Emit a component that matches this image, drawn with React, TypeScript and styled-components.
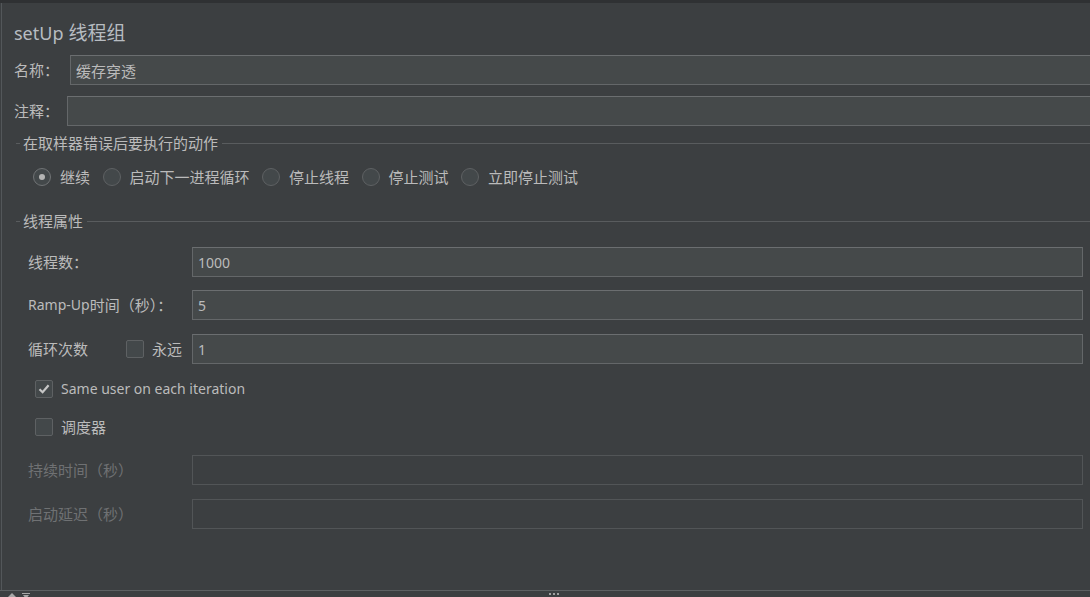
import React, { FC } from "react";
import styled, { createGlobalStyle } from "styled-components";

const GlobalStyle = createGlobalStyle`
  html, body {
    margin: 0;
    padding: 0;
    background: #3c3f41;
  }
  body {
    font-family: "Noto Sans CJK SC", "Noto Sans", sans-serif;
    font-size: 15px;
    color: #bbbbbb;
  }
`;

const StyledFrame = styled.div`
  width: 1090px;
  height: 597px;
  display: flex;
  flex-direction: column;
  overflow: hidden;
  background: #3c3f41;
`;

const StyledTopStrip = styled.div`
  height: 3px;
  background: #2f3133;
  flex-shrink: 0;
`;

const StyledPanel = styled.div`
  flex: 1;
  margin-left: 1px;
  border-left: 1px solid #53575a;
  padding: 17px 0 0 12px;
  display: flex;
  flex-direction: column;
  overflow: hidden;
`;

const StyledTitle = styled.h1`
  margin: 0 0 11px;
  height: 24px;
  display: flex;
  align-items: baseline;
  gap: 5px;
  font-size: 19px;
  font-weight: 400;
  line-height: 24px;
  color: #b7bcc1;
`;

const StyledLatin = styled.span<{ $size?: number }>`
  font-family: "Noto Sans", "Noto Sans CJK SC", sans-serif;
  font-size: ${({ $size }) => $size ?? 14}px;
`;

const StyledFieldRow = styled.div<{ $labelWidth: number; $gap?: number }>`
  display: flex;
  align-items: center;
  margin-bottom: ${({ $gap }) => $gap ?? 11}px;

  & > label {
    width: ${({ $labelWidth }) => $labelWidth}px;
  }
`;

const StyledLabel = styled.label<{ $disabled?: boolean }>`
  flex-shrink: 0;
  display: flex;
  align-items: center;
  line-height: 20px;
  color: ${({ $disabled }) => ($disabled ? "#6f7173" : "#bbbbbb")};
  white-space: nowrap;
`;

const StyledInput = styled.input<{ $bleed?: boolean; $latin?: boolean }>`
  flex: 1;
  min-width: 0;
  height: 30px;
  box-sizing: border-box;
  margin: 0 ${({ $bleed }) => ($bleed ? "-6px" : "7px")} 0 0;
  padding: 0 5px;
  border: 1px solid #646769;
  border-top-color: #6b6e70;
  background: #45494a;
  color: #bbbbbb;
  font-family: ${({ $latin }) =>
    $latin ? '"Noto Sans", "Noto Sans CJK SC", sans-serif' : "inherit"};
  font-size: ${({ $latin }) => ($latin ? 14 : 15)}px;
  outline: none;

  &:disabled {
    background: #3c3f41;
    border-color: #525557;
  }
`;

const StyledGroup = styled.section`
  margin-left: 2px;
`;

const StyledGroupHeader = styled.div`
  display: flex;
  align-items: center;
  gap: 3px;
  height: 20px;
  line-height: 20px;
`;

const StyledGroupLine = styled.span<{ $grow?: boolean }>`
  height: 1px;
  background: #595c5e;
  ${({ $grow }) => ($grow ? "flex: 1; margin-left: 1px;" : "width: 4px;")}
`;

const StyledRadioRow = styled.div`
  display: flex;
  align-items: center;
  padding-left: 17px;
  margin: 14px 0 24px;
  height: 20px;
`;

const StyledRadioItem = styled.label`
  display: flex;
  align-items: center;
  gap: 9px;
  margin-right: 12.5px;
  line-height: 20px;
`;

const StyledRadioCircle = styled.span<{ $checked?: boolean }>`
  width: 18px;
  height: 18px;
  box-sizing: border-box;
  border-radius: 50%;
  border: 1px solid ${({ $checked }) => ($checked ? "#707375" : "#5e6163")};
  background: #43484a;
  display: flex;
  align-items: center;
  justify-content: center;

  &::after {
    content: "";
    width: 6px;
    height: 6px;
    border-radius: 50%;
    background: #b4b4b4;
    display: ${({ $checked }) => ($checked ? "block" : "none")};
  }
`;

const StyledThreadBody = styled.div`
  padding: 16px 0 0 12px;
`;

const StyledCheckRow = styled.label<{ $top: number }>`
  display: flex;
  align-items: center;
  gap: 8px;
  margin: ${({ $top }) => $top}px 0 0 7px;
  height: 20px;
  line-height: 20px;
`;

const StyledBox = styled.span`
  width: 18px;
  height: 18px;
  box-sizing: border-box;
  border-radius: 2px;
  border: 1px solid #5e6163;
  background: #43484a;
  display: flex;
  align-items: center;
  justify-content: center;
  flex-shrink: 0;

  svg {
    display: block;
  }
`;

const StyledInlineCheck = styled.span`
  display: flex;
  align-items: center;
  gap: 8px;
  margin-left: 38px;
`;

const StyledStatusBar = styled.div`
  height: 6px;
  flex-shrink: 0;
  border-top: 1px solid #5d6062;
  background: #3c3f41;
  position: relative;
  overflow: hidden;
`;

const StyledStatusIcons = styled.div`
  display: flex;
  align-items: flex-start;
  gap: 6px;
  padding: 2px 0 0 8px;

  svg {
    display: block;
  }
`;

const StyledDots = styled.div`
  position: absolute;
  left: 549px;
  top: 2px;
  display: flex;
  gap: 2px;

  span {
    width: 2px;
    height: 2px;
    background: #a0a0a0;
  }
`;

const Checkbox: FC<{ checked?: boolean }> = ({ checked }) => (
  <StyledBox>
    {checked && (
      <svg width="14" height="14" viewBox="0 0 14 14">
        <path d="M2.5 7.2 L5.6 10.2 L11.6 3.2" fill="none" stroke="#c6c6c6" strokeWidth="2.2" />
      </svg>
    )}
  </StyledBox>
);

const Group: FC<{ title: string; children: React.ReactNode }> = ({ title, children }) => (
  <StyledGroup>
    <StyledGroupHeader>
      <StyledGroupLine />
      <span>{title}</span>
      <StyledGroupLine $grow />
    </StyledGroupHeader>
    {children}
  </StyledGroup>
);

const radios = ["继续", "启动下一进程循环", "停止线程", "停止测试", "立即停止测试"];

const App: FC = () => (
  <>
    <GlobalStyle />
    <StyledFrame>
      <StyledTopStrip />
      <StyledPanel>
        <StyledTitle>
          <StyledLatin $size={18}>setUp</StyledLatin>
          <span>线程组</span>
        </StyledTitle>

        <StyledFieldRow $labelWidth={56}>
          <StyledLabel>名称：</StyledLabel>
          <StyledInput $bleed readOnly defaultValue="缓存穿透" />
        </StyledFieldRow>
        <StyledFieldRow $labelWidth={53} $gap={7}>
          <StyledLabel>注释：</StyledLabel>
          <StyledInput $bleed readOnly defaultValue="" />
        </StyledFieldRow>

        <Group title="在取样器错误后要执行的动作">
          <StyledRadioRow>
            {radios.map((r, i) => (
              <StyledRadioItem key={r}>
                <StyledRadioCircle $checked={i === 0} />
                {r}
              </StyledRadioItem>
            ))}
          </StyledRadioRow>
        </Group>

        <Group title="线程属性">
          <StyledThreadBody>
            <StyledFieldRow $labelWidth={164} $gap={13}>
              <StyledLabel>线程数：</StyledLabel>
              <StyledInput $latin readOnly defaultValue="1000" />
            </StyledFieldRow>
            <StyledFieldRow $labelWidth={164} $gap={14}>
              <StyledLabel>
                <StyledLatin>Ramp-Up</StyledLatin>时间（秒）：
              </StyledLabel>
              <StyledInput $latin readOnly defaultValue="5" />
            </StyledFieldRow>
            <StyledFieldRow $labelWidth={164} $gap={0}>
              <StyledLabel>
                循环次数
                <StyledInlineCheck>
                  <Checkbox />
                  永远
                </StyledInlineCheck>
              </StyledLabel>
              <StyledInput $latin readOnly defaultValue="1" />
            </StyledFieldRow>

            <StyledCheckRow $top={15}>
              <Checkbox checked />
              <StyledLatin>Same user on each iteration</StyledLatin>
            </StyledCheckRow>
            <StyledCheckRow $top={18}>
              <Checkbox />
              调度器
            </StyledCheckRow>

            <StyledFieldRow $labelWidth={164} $gap={14} style={{ marginTop: 18 }}>
              <StyledLabel $disabled>持续时间（秒）</StyledLabel>
              <StyledInput disabled defaultValue="" />
            </StyledFieldRow>
            <StyledFieldRow $labelWidth={164} $gap={0}>
              <StyledLabel $disabled>启动延迟（秒）</StyledLabel>
              <StyledInput disabled defaultValue="" />
            </StyledFieldRow>
          </StyledThreadBody>
        </Group>
      </StyledPanel>
      <StyledStatusBar>
        <StyledStatusIcons>
          <svg width="8" height="6" viewBox="0 0 8 6">
            <path d="M4 0 L8 4 L5 4 L5 6 L3 6 L3 4 L0 4 Z" fill="#a8a8a8" />
          </svg>
          <svg width="8" height="6" viewBox="0 0 8 6">
            <path d="M0 0 H8 V1 H0 Z M1 2 H7 L4 6 Z" fill="#a8a8a8" />
          </svg>
        </StyledStatusIcons>
        <StyledDots>
          <span />
          <span />
          <span />
        </StyledDots>
      </StyledStatusBar>
    </StyledFrame>
  </>
);

export default App;
